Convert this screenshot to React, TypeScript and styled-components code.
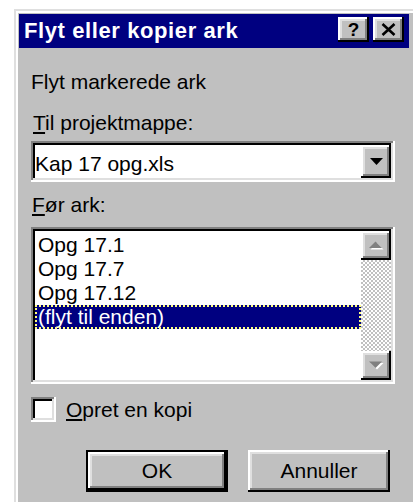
import styled, { createGlobalStyle, css } from "styled-components";

const GlobalStyle = createGlobalStyle`
  html, body {
    margin: 0;
    padding: 0;
    background: #fff;
    overflow: hidden;
  }
  body {
    font-family: "Liberation Sans", Arial, sans-serif;
  }
  u {
    text-decoration-thickness: 2px;
    text-underline-offset: 2px;
  }
`;

// classic 3D frames, two rings each
const raised = css`
  box-shadow: inset -2px -2px #000, inset 2px 2px #fff, inset -4px -4px #808080,
    inset 4px 4px #dfdfdf;
`;

const sunken = css`
  box-shadow: inset -2px -2px #fff, inset 2px 2px #808080, inset -4px -4px #dfdfdf,
    inset 4px 4px #000;
`;

const Window = styled.div`
  box-sizing: border-box;
  margin: 9px 0 0 14px;
  width: 404px;
  height: 520px;
  padding: 5px 9px 5px 5px;
  background: #c0c0c0;
  color: #000;
  font-size: 21px;
  box-shadow: inset -2px -2px #000, inset 2px 2px #dfdfdf, inset -4px -4px #808080,
    inset 4px 4px #fff;
`;

const TitleBar = styled.div`
  height: 34px;
  display: flex;
  align-items: center;
  gap: 4px;
  padding: 0 5px;
  background: #000080;
  color: #fff;
`;

const Title = styled.div`
  flex: 1;
  font-size: 22px;
  font-weight: 700;
  letter-spacing: 0.6px;
  white-space: nowrap;
`;

const CaptionButton = styled.div`
  width: 31px;
  height: 25px;
  margin-bottom: 4px;
  display: flex;
  align-items: center;
  justify-content: center;
  background: #c0c0c0;
  color: #000;
  font-size: 19px;
  font-weight: 700;
  line-height: 1;
  ${raised}
`;

const Body = styled.div`
  display: flex;
  flex-direction: column;
  padding: 22px 14px 0 12px;
`;

const Text = styled.div<{ $mt?: number; $indent?: number }>`
  line-height: 24px;
  margin-top: ${({ $mt }) => $mt ?? 0}px;
  padding-left: ${({ $indent }) => $indent ?? 0}px;
  white-space: nowrap;
`;

const Combo = styled.div`
  box-sizing: border-box;
  margin-top: 6px;
  height: 41px;
  padding: 4px;
  display: flex;
  background: #fff;
  ${sunken}
`;

const ComboValue = styled.div`
  flex: 1;
  padding-top: 7px;
  line-height: 24px;
`;

const ArrowButton = styled.div<{ $h: number }>`
  width: 30px;
  height: ${({ $h }) => $h}px;
  flex-shrink: 0;
  display: flex;
  align-items: center;
  justify-content: center;
  background: #c0c0c0;
  ${raised}
`;

const ListBox = styled.div`
  box-sizing: border-box;
  margin-top: 10px;
  height: 157px;
  padding: 4px;
  display: flex;
  background: #fff;
  ${sunken}
`;

const Items = styled.div`
  flex: 1;
  padding-top: 2px;
`;

const Item = styled.div<{ $selected?: boolean }>`
  height: 24px;
  line-height: 24px;
  padding-left: 3px;
  white-space: nowrap;
  ${({ $selected }) =>
    $selected &&
    css`
      background: #000080;
      color: #fff;
      outline: 2px dotted #ffff7f;
      outline-offset: -2px;
    `}
`;

const ScrollBar = styled.div`
  width: 30px;
  display: flex;
  flex-direction: column;
`;

const Track = styled.div`
  flex: 1;
  background: repeating-conic-gradient(#c0c0c0 0% 25%, #fff 0% 50%) 0 0 / 4px 4px;
`;

const CheckRow = styled.div`
  margin-top: 13px;
  display: flex;
  align-items: center;
  gap: 10px;
`;

const CheckBox = styled.div`
  width: 25px;
  height: 25px;
  background: #fff;
  ${sunken}
`;

const Buttons = styled.div`
  margin-top: 28px;
  padding-right: 5px;
  display: flex;
  justify-content: flex-end;
  gap: 20px;
`;

const Button = styled.div<{ $default?: boolean }>`
  width: 142px;
  height: 42px;
  display: flex;
  align-items: center;
  justify-content: center;
  background: #c0c0c0;
  ${({ $default }) =>
    $default
      ? css`
          box-shadow: inset 2px 2px #000, inset -2px -2px #000, inset -4px -4px #000,
            inset 4px 4px #fff, inset -6px -6px #808080, inset 6px 6px #dfdfdf;
        `
      : raised}
`;

const DownArrow = () => (
  <svg width="13" height="7" viewBox="0 0 13 7">
    <polygon points="0,0 13,0 6.5,7" fill="#000" />
  </svg>
);

// disabled scroll arrows: grey glyph with a white drop
const GreyArrow = ({ up }: { up?: boolean }) => (
  <svg width="15" height="9" viewBox="0 0 15 9">
    <polygon
      points={up ? "1.5,8.5 14.5,8.5 8,2" : "1.5,2 14.5,2 8,8.5"}
      fill="#fff"
    />
    <polygon points={up ? "0,7 13,7 6.5,0.5" : "0,0.5 13,0.5 6.5,7"} fill="#808080" />
  </svg>
);

const CloseGlyph = () => (
  <svg width="15" height="13" viewBox="0 0 15 13">
    <path d="M1.5 1 L13.5 12 M13.5 1 L1.5 12" stroke="#000" strokeWidth="2.6" />
  </svg>
);

export default function App() {
  return (
    <>
      <GlobalStyle />
      <Window>
        <TitleBar>
          <Title>Flyt eller kopier ark</Title>
          <CaptionButton>?</CaptionButton>
          <CaptionButton>
            <CloseGlyph />
          </CaptionButton>
        </TitleBar>
        <Body>
          <Text>Flyt markerede ark</Text>
          <Text $mt={17} $indent={2}>
            <u>T</u>il projektmappe:
          </Text>
          <Combo>
            <ComboValue>Kap 17 opg.xls</ComboValue>
            <ArrowButton $h={33}>
              <DownArrow />
            </ArrowButton>
          </Combo>
          <Text $mt={11} $indent={1}>
            <u>F</u>ør ark:
          </Text>
          <ListBox>
            <Items>
              <Item>Opg 17.1</Item>
              <Item>Opg 17.7</Item>
              <Item>Opg 17.12</Item>
              <Item $selected>(flyt til enden)</Item>
            </Items>
            <ScrollBar>
              <ArrowButton $h={29}>
                <GreyArrow up />
              </ArrowButton>
              <Track />
              <ArrowButton $h={29}>
                <GreyArrow />
              </ArrowButton>
            </ScrollBar>
          </ListBox>
          <CheckRow>
            <CheckBox />
            <Text>
              <u>O</u>pret en kopi
            </Text>
          </CheckRow>
          <Buttons>
            <Button $default>OK</Button>
            <Button>Annuller</Button>
          </Buttons>
        </Body>
      </Window>
    </>
  );
}
